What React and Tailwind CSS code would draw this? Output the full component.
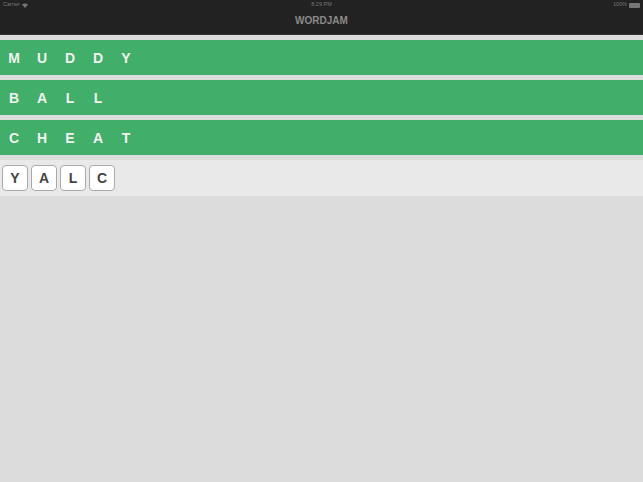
import React from "react";

const words = ["MUDDY", "BALL", "CHEAT"];
const tiles = ["Y", "A", "L", "C"];

export default function App() {
  return (
    <div
      className="w-[643px] h-[482px] bg-[#dcdcdc] overflow-hidden flex flex-col"
      style={{ fontFamily: '"Liberation Sans", Arial, sans-serif' }}
    >
      <div className="h-[35px] bg-[#222222] flex flex-col border-b border-[#333]">
        <div className="h-[10px] flex items-center justify-between px-[3px] text-[5.5px] text-[#777] leading-none">
          <div className="flex items-center gap-[2px] w-[60px]">
            <span>Carrier</span>
            <svg width="6" height="5" viewBox="0 0 10 8">
              <path d="M5 8 L0 2.5 Q5 -1.5 10 2.5 Z" fill="#777" />
            </svg>
          </div>
          <span>8:29 PM</span>
          <div className="flex items-center justify-end gap-[2px] w-[60px]">
            <span>100%</span>
            <div className="w-[11px] h-[5px] bg-[#777] rounded-[1px]" />
          </div>
        </div>
        <div className="flex-1 flex items-center justify-center text-[10px] font-bold text-[#8a8a8a] pb-[3px]">
          WORDJAM
        </div>
      </div>
      <div className="flex flex-col gap-[5px] pt-[5px]">
        {words.map((w) => (
          <div key={w} className="h-[35px] bg-[#41ae69] flex items-center pt-[2px]">
            {w.split("").map((c, i) => (
              <span
                key={i}
                className="w-[28px] text-center text-[14px] font-bold text-[#f2f2f2]"
              >
                {c}
              </span>
            ))}
          </div>
        ))}
      </div>
      <div className="mt-[5px] h-[36px] bg-[#e9e9e9] flex items-center gap-[3px] px-[2px]">
        {tiles.map((t, i) => (
          <div
            key={i}
            className="w-[26px] h-[26px] pt-[1px] bg-white border border-[#aaaaaa] rounded-[4px] flex items-center justify-center text-[14px] font-bold text-[#444]"
          >
            {t}
          </div>
        ))}
      </div>
    </div>
  );
}
